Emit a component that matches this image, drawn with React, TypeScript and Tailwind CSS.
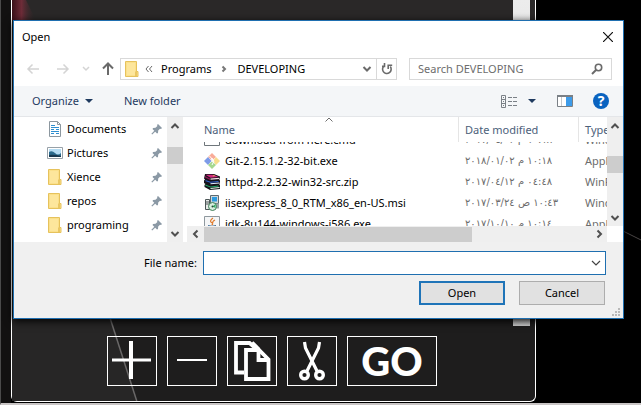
import { useLayoutEffect, useRef } from "react";
import type { ReactNode } from "react";

type IconProps = { className?: string };

const FolderIcon = ({ className = "" }: IconProps) => (
  <svg viewBox="0 0 14 16" className={`h-4 w-3.5 shrink-0 ${className}`}>
    <path d="M.5.5h11v10h1.5v5H.5z" fill="#fbe08a" stroke="#e6c25c" />
    <path d="M2 2h8v12H2z" fill="#fde69c" />
    <path d="M11 10.5v4.500" stroke="#d9ae3c" />
  </svg>
);

const DocumentIcon = () => (
  <svg viewBox="0 0 14 16" className="h-4 w-3.5 shrink-0">
    <path d="M1.500.5h8l3 3v12h-11z" fill="#fff" stroke="#8c979f" />
    <path d="M9.500.5v3h3" fill="none" stroke="#8c979f" />
    <path d="M3 4.500h4M3 6.500h8M3 8.500h3M8 8.500h3M3 10.500h8M3 12.500h3M8 12.500h3" stroke="#2f8fd0" />
  </svg>
);

const PictureIcon = () => (
  <svg viewBox="0 0 16 12" className="h-3 w-4 shrink-0">
    <path d="M.5.5h15v11H.5z" fill="#fff" stroke="#98a1a8" />
    <path d="M2 2h12v8H2z" fill="#b5dcf3" />
    <path d="M2 5q3-2 6 1t6 0v4H2z" fill="#2b6a8c" />
    <path d="M2 8q5-1 12 1v1H2z" fill="#18384f" />
  </svg>
);

const PinIcon = () => (
  <svg viewBox="0 0 12 12" className="h-3 w-3 shrink-0" aria-hidden="true">
    <path d="M7 1l4 4-1 1-1-.3L7.200 7.600 7 10 6 10.500 1.500 6l.6-1 2.400-.2L6.400 3 6 2z" fill="#8b99a5" />
    <path d="M4 8L.8 11.200" stroke="#8b99a5" strokeWidth="1.200" />
  </svg>
);

const GitIcon = () => (
  <svg viewBox="0 0 16 16" className="h-4 w-4 shrink-0">
    <path d="M8 0l4 4-4 3.500L4 4z" fill="#f9ab98" />
    <path d="M12 4l4 4-4 4-3-4z" fill="#f7dc8c" />
    <path d="M4 4L0 8l4 4 3.500-4z" fill="#7d9be8" />
    <path d="M8 8.500l4 3.500-4 4-4-4z" fill="#a5d88f" />
    <path d="M5.500 3l4.500 5-2 4" fill="none" stroke="#fff" />
    <circle cx="8" cy="6" r="1" fill="#fff" />
  </svg>
);

const RarIcon = () => (
  <svg viewBox="0 0 16 16" className="h-4 w-4 shrink-0">
    <path d="M1 0h9l6 2.500V5l-1 .5 1 1v3l-1 .5 1 1V15l-10 1-5.500-3v-2l1-1L0 9V6.500l1-1L0 4.500z" fill="#16131a" />
    <path d="M1.500.8h8L14.500 3l-8 .8z" fill="#d0287e" />
    <path d="M6.500 4.600l9-.9v1.200l-9 .9z" fill="#f6dfe8" />
    <path d="M1 2l5 2.500v1.500L1 3.500z" fill="#8c1452" />
    <path d="M2 6.300l4.500 1.500 8-.9v1l-8 .9L1 7z" fill="#2f63d4" />
    <path d="M6.500 9.300l9-.9v1l-9 .9z" fill="#e4ebff" />
    <path d="M2 10.800l4.500 1.700 8-.9v1l-8 .9L1 11.500z" fill="#1fa866" />
    <path d="M6.500 14l9-.9v1l-9 .9z" fill="#def5e4" />
    <path d="M9.500 1l2 .8-3 .6z" fill="#e6b34a" />
  </svg>
);

const MsiIcon = () => (
  <svg viewBox="0 0 16 16" className="h-4 w-4 shrink-0">
    <path d="M6.500.5h8v8h-8z" fill="#cfd6da" stroke="#5d6a70" />
    <path d="M8 2h5v4.500H8z" fill="#2d9be0" />
    <path d="M1.500 4.500h4v10h-4z" fill="#e8ebe9" stroke="#4c5657" />
    <path d="M2 7h3M2 9h3" stroke="#4c5657" />
    <path d="M12 8.500h3v5h-3z" fill="#9aa4a8" />
    <circle cx="8.500" cy="11.500" r="4" fill="#d9eee0" stroke="#3f7d58" />
    <path d="M8.500 11.500l3-2.500v4z" fill="#2fae66" />
    <circle cx="8.500" cy="11.500" r="1" fill="#2c4b3a" />
  </svg>
);

const JavaIcon = () => (
  <svg viewBox="0 0 16 16" className="h-4 w-4 shrink-0">
    <path d="M.5.5h15v15H.5z" fill="#f5f6f7" stroke="#8f989e" />
    <path d="M9 2q-4 3-1.500 4.500T7.500 9M11 4q-3 1.500-2 3" fill="none" stroke="#e07b2c" strokeWidth="1.200" />
    <path d="M4 9.500q4 1.500 8 0M4.500 11.500q3.500 1.500 7 0" fill="none" stroke="#3f6e9a" />
  </svg>
);

const CmdIcon = () => (
  <svg viewBox="0 0 16 16" className="h-4 w-4 shrink-0">
    <path d="M.5.5h15v13H.5z" fill="#fff" stroke="#6f767b" />
  </svg>
);

const Chevron = ({ d, className = "" }: { d: string; className?: string }) => (
  <svg viewBox="0 0 10 10" className={`h-2.5 w-2.5 shrink-0 ${className}`} fill="none" stroke="currentColor">
    <path d={d} strokeWidth="2" />
  </svg>
);

const UP = "M1.500 7L5 3.500 8.500 7";
const DOWN = "M1.500 3L5 6.500 8.500 3";
const LEFT = "M6.500 1.500L3 5l3.500 3.500";
const RIGHT = "M3.500 1.500L7 5 3.500 8.500";
const SMALL_RIGHT = "M3.500 2.500L6 5 3.500 7.500";

const VerticalScroll = ({ thumb }: { thumb: string }) => (
  <div className="flex w-4 shrink-0 flex-col items-center bg-[#efefef] text-[#505050]">
    <button type="button" aria-label="Scroll up" className="flex h-[17px] w-full items-center justify-center">
      <Chevron d={UP} />
    </button>
    <div className="w-full grow">
      <div className={`h-[17px] w-full bg-[#cdcdcd] ${thumb}`} />
    </div>
    <button type="button" aria-label="Scroll down" className="flex h-[17px] w-full items-center justify-center">
      <Chevron d={DOWN} />
    </button>
  </div>
);

const places: { name: string; icon: ReactNode }[] = [
  { name: "Documents", icon: <DocumentIcon /> },
  { name: "Pictures", icon: <PictureIcon /> },
  { name: "Xience", icon: <FolderIcon /> },
  { name: "repos", icon: <FolderIcon /> },
  { name: "programing", icon: <FolderIcon /> },
];

const files: { name: string; date: string; type: string; icon: ReactNode }[] = [
  { name: "download from here.cmd", date: "١٠:١٨ م ٢٠١٧/٠٤/٠٢", type: "Windows", icon: <CmdIcon /> },
  { name: "Git-2.15.1.2-32-bit.exe", date: "١٠:١٨ م ٢٠١٨/٠١/٠٢", type: "Application", icon: <GitIcon /> },
  { name: "httpd-2.2.32-win32-src.zip", date: "٠٤:٤٨ م ٢٠١٧/٠٤/١٢", type: "WinRAR", icon: <RarIcon /> },
  { name: "iisexpress_8_0_RTM_x86_en-US.msi", date: "١٠:٤٣ ص ٢٠١٧/٠٣/٢٤", type: "Windows", icon: <MsiIcon /> },
  { name: "jdk-8u144-windows-i586.exe", date: "١٠:١٤ م ٢٠١٧/١٠/١٠", type: "Application", icon: <JavaIcon /> },
];

function FileTable() {
  const pane = useRef<HTMLDivElement>(null);
  useLayoutEffect(() => {
    if (pane.current) pane.current.scrollTop = 13;
  }, []);
  return (
    <div ref={pane} className="h-[109px] min-w-0 grow overflow-hidden">
      <table className="w-full table-fixed border-separate border-spacing-0 whitespace-nowrap text-left">
        <colgroup>
          <col />
          <col className="w-[120px]" />
          <col className="w-7" />
        </colgroup>
        <thead className="sticky top-0 z-10 bg-white text-[#4c607a]">
          <tr className="h-[25px]">
            <th className="border-r border-[#e5e5e5] p-0 pl-[17px] font-normal">Name</th>
            <th className="border-r border-[#e5e5e5] p-0 pl-1.5 font-normal">Date modified</th>
            <th className="overflow-hidden p-0 pl-1.5 font-normal">Type</th>
          </tr>
        </thead>
        <tbody>
          {files.map((f) => (
            <tr key={f.name} className="h-[21px]">
              <td className="p-0 pl-[17px]">
                <div className="flex h-[21px] items-center gap-[5px]">
                  {f.icon}
                  <span>{f.name}</span>
                </div>
              </td>
              <td className="p-0 pl-1.5 font-['DejaVu_Sans',sans-serif] text-[10px] text-[#6d6d6d]">{f.date}</td>
              <td className="overflow-hidden p-0 pl-1.5 text-[#6d6d6d]">{f.type}</td>
            </tr>
          ))}
        </tbody>
      </table>
    </div>
  );
}

function OpenDialog() {
  return (
    <section
      role="dialog"
      aria-label="Open"
      className="absolute left-3 right-[17px] top-5 border border-[#1f6fb0] bg-white text-[11px] leading-4 text-black shadow-[0_2px_8px_#000]"
    >
      <header className="flex h-8 items-center justify-between pl-2 pr-2.5">
        <h1>Open</h1>
        <button type="button" aria-label="Close">
          <svg viewBox="0 0 10 10" className="h-2.5 w-2.5" stroke="#111" fill="none">
            <path d="M0 0l10 10M10 0L0 10" strokeWidth="1.200" />
          </svg>
        </button>
      </header>

      <nav className="flex h-[33px] items-center pb-1.5 pl-3 pr-[11px] pt-1">
        <button type="button" aria-label="Back" className="mr-4">
          <svg viewBox="0 0 14 12" className="h-3 w-3.5" fill="none" stroke="#d4d4d4" strokeWidth="1.500">
            <path d="M13 6H2M6.500 1.500L2 6l4.500 4.500" />
          </svg>
        </button>
        <button type="button" aria-label="Forward" className="mr-3">
          <svg viewBox="0 0 14 12" className="h-3 w-3.5" fill="none" stroke="#d4d4d4" strokeWidth="1.500">
            <path d="M1 6h11M7.500 1.500L12 6l-4.500 4.500" />
          </svg>
        </button>
        <button type="button" aria-label="Recent locations" className="mr-3 text-[#d4d4d4]">
          <svg viewBox="0 0 8 6" className="h-1.5 w-2" fill="none" stroke="currentColor" strokeWidth="1.500">
            <path d="M1 1l3 3 3-3" />
          </svg>
        </button>
        <button type="button" aria-label="Up" className="mr-1.5">
          <svg viewBox="0 0 12 13" className="h-[13px] w-3" fill="none" stroke="#6a6a6a" strokeWidth="2">
            <path d="M6 13V2M1 6.500L6 1.500l5 5" />
          </svg>
        </button>
        <div className="flex h-[22px] grow items-center border border-[#d9d9d9]">
          <FolderIcon className="ml-1" />
          <svg viewBox="0 0 8 8" className="ml-1.5 mr-2 h-2 w-2" fill="none" stroke="#6a6a6a" aria-hidden="true">
            <path d="M3.500 1L1 4l2.500 3M7 1L4.500 4 7 7" />
          </svg>
          <button type="button">Programs</button>
          <Chevron d={SMALL_RIGHT} className="mx-2 text-[#777]" />
          <button type="button">DEVELOPING</button>
          <button type="button" aria-label="Previous locations" className="ml-auto mr-1 text-[#6a6a6a]">
            <Chevron d={DOWN} />
          </button>
          <button
            type="button"
            aria-label="Refresh"
            className="flex h-full w-5 items-center justify-center border-l border-[#d9d9d9]"
          >
            <svg viewBox="0 0 12 12" className="h-3 w-3" fill="none" stroke="#6a6a6a" strokeWidth="1.600">
              <path d="M3.500 2.600a4.300 4.300 0 1 0 5.800 1M7.200 6V2.200h4M3.500 0v3.400H1" />
            </svg>
          </button>
        </div>
        <label className="ml-3 flex h-[22px] w-[203px] items-center border border-[#d9d9d9] pr-2">
          <input
            type="text"
            aria-label="Search DEVELOPING"
            placeholder="Search DEVELOPING"
            className="min-w-0 grow pl-2 placeholder:text-[#6d6d6d] focus:outline-none"
          />
          <svg viewBox="0 0 12 12" className="h-3 w-3" fill="none" stroke="#6a6a6a">
            <circle cx="7.500" cy="4.500" r="3.200" strokeWidth="1.600" />
            <path d="M5 7L1 11" strokeWidth="2" />
          </svg>
        </label>
      </nav>

      <div className="flex h-[31px] items-center border-b border-[#e4e6e9] bg-[#f4f6f8] pl-[18px] pr-3.5 text-[#1f3a5f]">
        <button type="button" className="mr-[31px] flex items-center gap-1.5">
          Organize
          <svg viewBox="0 0 8 4" className="h-1 w-2" fill="currentColor">
            <path d="M0 0h8L4 4z" />
          </svg>
        </button>
        <button type="button">New folder</button>
        <button type="button" aria-label="Change your view" className="ml-auto mr-[21px] flex items-center gap-2.5">
          <svg viewBox="0 0 17 13" className="h-[13px] w-[17px]" fill="none" stroke="#7a8086">
            <path d="M.5.5h4v12h-4zM.5 4.500h4M.5 8.500h4M2 2.500h1M2 6.500h1M2 10.500h1" />
            <path d="M7 2.500h4M12 2.500h4M7 6.500h4M12 6.500h4M7 10.500h4M12 10.500h4" />
          </svg>
          <svg viewBox="0 0 8 4" className="h-1 w-2" fill="currentColor">
            <path d="M0 0h8L4 4z" />
          </svg>
        </button>
        <button type="button" aria-label="Show the preview pane" className="mr-5">
          <svg viewBox="0 0 16 12" className="h-3 w-4">
            <path d="M.5.5h15v11H.5z" fill="#fff" stroke="#7a8086" />
            <path d="M0 0h16v2H0z" fill="#7a8086" />
            <path d="M9 2h6v9H9z" fill="#3d9be9" />
            <path d="M4.500 2v9" stroke="#c5c9cc" />
          </svg>
        </button>
        <button
          type="button"
          aria-label="Help"
          className="flex h-4 w-4 items-center justify-center rounded-full bg-[#0a63c0] text-sm font-bold text-white"
        >
          ?
        </button>
      </div>

      <div className="flex h-[125px]">
        <ul className="grow basis-0">
          {places.map((p) => (
            <li key={p.name} className="flex h-6 items-center pr-1">
              <span className="ml-8 mr-1 flex w-[17px] justify-center">{p.icon}</span>
              <span className="grow">{p.name}</span>
              <PinIcon />
            </li>
          ))}
        </ul>
        <VerticalScroll thumb="mt-[13px]" />
        <div className="ml-1 flex w-[436px] shrink-0 flex-col">
          <div className="relative flex">
            <FileTable />
            <VerticalScroll thumb="mt-[22px]" />
            <svg
              viewBox="0 0 8 5"
              className="absolute left-[138px] top-0 z-20 h-[5px] w-2"
              fill="none"
              stroke="#6d6d6d"
              aria-hidden="true"
            >
              <path d="M.5 4.500L4 1l3.500 3.500" />
            </svg>
          </div>
          <div className="flex h-4">
            <div className="flex grow items-center bg-[#efefef] text-[#505050]">
              <button type="button" aria-label="Scroll left" className="flex w-[17px] justify-center">
                <Chevron d={LEFT} />
              </button>
              <div className="h-[15px] w-[268px] bg-[#cdcdcd]" />
              <button type="button" aria-label="Scroll right" className="ml-auto flex w-[17px] justify-center">
                <Chevron d={RIGHT} />
              </button>
            </div>
            <div className="w-4" />
          </div>
        </div>
      </div>

      <form className="bg-[#f0f0f0] pl-[130px] pr-[17px] pt-[9px]" onSubmit={(e) => e.preventDefault()}>
        <div className="flex items-center">
          <label htmlFor="file-name" className="w-[59px]">
            File name:
          </label>
          <div className="flex h-6 grow items-center border border-[#1f6fb0] bg-white pr-1">
            <input id="file-name" type="text" className="min-w-0 grow px-1 focus:outline-none" />
            <button type="button" aria-label="File name history">
              <svg viewBox="0 0 10 6" className="h-1.5 w-2.5" fill="none" stroke="#444" strokeWidth="1.200">
                <path d="M1 1l4 4 4-4" />
              </svg>
            </button>
          </div>
        </div>
        <div className="mt-1.5 flex justify-end gap-3.5 pr-px">
          <button type="submit" className="h-6 w-[86px] border-2 border-[#1f74b8] bg-[#e1e1e1]">
            Open
          </button>
          <button type="button" className="h-6 w-[86px] border border-[#adadad] bg-[#e1e1e1]">
            Cancel
          </button>
        </div>
        <div className="-mr-3.5 flex h-[13px] items-end justify-end pb-0.5">
          <svg viewBox="0 0 8 8" className="h-2 w-2" fill="#b9b9b9" aria-hidden="true">
            <path d="M0 6h2v2H0zM3 6h2v2H3zM6 6h2v2H6zM3 3h2v2H3zM6 3h2v2H6zM6 0h2v2H6z" />
          </svg>
        </div>
      </form>
    </section>
  );
}

const toolClass = "flex h-[50px] w-[50px] items-center justify-center border border-white";

export default function App() {
  return (
    <div className="relative flex min-h-screen flex-col overflow-hidden border-b-2 border-l border-b-[#c9c5c5] border-l-[#4a4a4a] bg-black pl-2.5 pr-[105px] font-['Noto_Sans','Open_Sans',sans-serif]">
      <svg className="absolute inset-0 h-full w-full" viewBox="0 0 640 403" preserveAspectRatio="none" aria-hidden="true">
        <path d="M0 0h10v403H0z" fill="#121111" />
        <path d="M622 231l18 9" stroke="#4a4646" />
      </svg>
      <main className="relative mb-px flex grow flex-col rounded-b-md border border-t-0 border-white bg-[#1e1d1d]">
        <svg className="absolute inset-0 h-full w-full" viewBox="0 0 524 402" preserveAspectRatio="none" aria-hidden="true">
          <defs>
            <linearGradient id="glow">
              <stop offset="0" stopColor="#3a1018" />
              <stop offset="0.400" stopColor="#6e2c38" />
              <stop offset="1" stopColor="#2a2828" stopOpacity="0" />
            </linearGradient>
          </defs>
          <path d="M0 0h524v20H0z" fill="#2a2828" />
          <path d="M0 0h14l10 20H0z" fill="url(#glow)" />
          <path d="M0 318h98l27 84H0z" fill="#272626" />
          <path d="M98 318l27 84" stroke="#6a6868" strokeWidth="1.500" />
        </svg>
        <div className="relative mr-[5px] flex h-[326px] justify-end">
          <div className="w-[17px] bg-gradient-to-b from-[#ececec] to-[#cfcfcf]" />
        </div>
        <div className="relative mb-[15px] ml-[95px] mt-2.5 flex gap-2.5 text-white">
          <button type="button" aria-label="Add" className={toolClass}>
            <svg viewBox="0 0 40 40" className="h-10 w-10" stroke="#fff" fill="none">
              <path d="M0 19h39" strokeWidth="3" />
              <path d="M19 0v38" strokeWidth="4" />
            </svg>
          </button>
          <button type="button" aria-label="Remove" className={toolClass}>
            <svg viewBox="0 0 40 40" className="h-10 w-10" stroke="#fff" fill="none">
              <path d="M5 19h30" strokeWidth="2" />
            </svg>
          </button>
          <button type="button" aria-label="Copy" className={toolClass}>
            <svg viewBox="0 0 40 40" className="h-10 w-10" stroke="#fff" fill="none" strokeWidth="3.800">
              <path d="M12 31.500H4V2h13.500l7 6" />
              <path d="M14 9h13l9.500 9.500V38H14z" />
              <path d="M26.500 9v10H37" />
              <path d="M20 1.500L27 8.500" />
            </svg>
          </button>
          <button type="button" aria-label="Cut" className={toolClass}>
            <svg viewBox="0 0 40 40" className="h-10 w-10" stroke="#fff" fill="none">
              <path d="M12.500 1l1 6L25 30M27.500 1l-1 6L15 30" strokeWidth="3.200" />
              <circle cx="12.500" cy="34" r="3.800" strokeWidth="3.400" />
              <circle cx="27.500" cy="34" r="3.800" strokeWidth="3.400" />
            </svg>
          </button>
          <button
            type="button"
            className="flex h-[50px] w-[90px] items-center justify-center border border-white font-['Lato',sans-serif] text-[40px] font-black leading-none"
          >
            GO
          </button>
        </div>
      </main>
      <OpenDialog />
    </div>
  );
}
